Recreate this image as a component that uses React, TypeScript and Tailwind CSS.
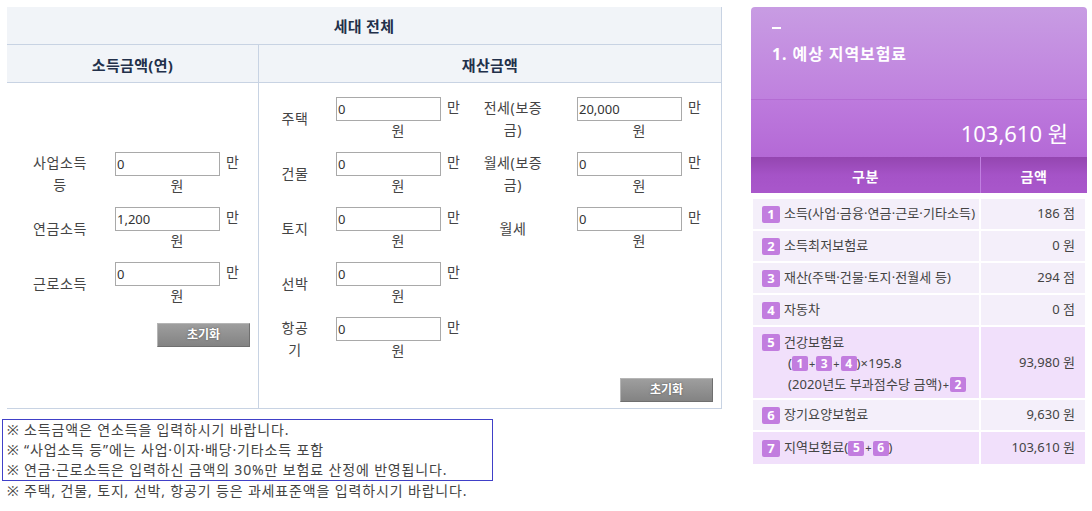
import React from "react";

function Field({ value }: { value: string }) {
  return (
    <div className="flex flex-col w-[124px]">
      <div className="flex items-start">
        <input
          readOnly
          value={value}
          className="w-[105px] h-[24px] border border-[#a9a9a9] bg-white px-[1px] text-[13px] tracking-normal text-[#333] outline-none"
        />
        <span className="ml-[6px] text-[14px] leading-[20px] text-[#444]">만</span>
      </div>
      <div className="text-center text-[14px] leading-[20px] text-[#444]">원</div>
    </div>
  );
}

function ResetButton() {
  return (
    <button className="w-[93px] h-[24px] border border-t-[#b5b5b5] border-l-[#b5b5b5] border-r-[#6f6f6f] border-b-[#6f6f6f] bg-gradient-to-b from-[#9e9e9e] to-[#838383] text-white text-[12px] font-bold leading-none tracking-normal [text-shadow:0_0_2px_#555]">
      초기화
    </button>
  );
}

function Badge({ n, small }: { n: string; small?: boolean }) {
  return (
    <span
      className={
        small
          ? "inline-flex items-center justify-center w-[16px] h-[15px] rounded-[2px] bg-[#c27ddf] text-white text-[12px] font-bold leading-none tracking-normal"
          : "inline-flex items-center justify-center w-[18px] h-[17px] rounded-[2px] bg-[#c27ddf] text-white text-[13px] font-bold leading-none tracking-normal shrink-0"
      }
    >
      {n}
    </span>
  );
}

function Row({
  n,
  label,
  value,
  strong,
}: {
  n: string;
  label: React.ReactNode;
  value: string;
  strong?: boolean;
}) {
  const bg = strong ? "bg-[#f1e0fb]" : "bg-[#f4effa]";
  return (
    <div className="grid grid-cols-[226px_104px] gap-x-[2px] h-[30px]">
      <div className={`${bg} flex items-center pl-[9px]`}>
        <Badge n={n} />
        <span className="ml-[4px] text-[13px] tracking-[0.1px] text-[#444] whitespace-nowrap">{label}</span>
      </div>
      <div className={`${bg} flex items-center justify-end pr-[10px] text-[13px] text-[#444]`}>{value}</div>
    </div>
  );
}

const Plus = () => <span className="text-[11px] mx-[1px] text-[#444] tracking-normal">+</span>;

function Label({ w, children }: { w: string; children: React.ReactNode }) {
  return <div className={`${w} text-center leading-[22px] text-[14px] tracking-[0.6px]`}>{children}</div>;
}

export default function App() {
  return (
    <div className="w-[1092px] h-[511px] bg-white flex font-['Noto_Sans','Noto_Sans_CJK_KR',sans-serif] text-[#444]">
      {/* Left */}
      <div className="pl-[2px] pt-[7px] w-[722px]">
        <div className="ml-[5px] w-[715px] border-r border-b border-[#c8d3e3]">
          <div className="h-[38px] bg-[#f1f4f8] border-b border-[#c8d3e3] flex items-center justify-center pt-[2px] text-[15px] font-bold text-[#22304a] tracking-[0.3px]">
            세대 전체
          </div>
          <div className="h-[38px] bg-[#f1f4f8] border-b border-[#c8d3e3] grid grid-cols-[252px_1fr] text-[15px] font-bold text-[#22304a] tracking-[0.3px]">
            <div className="border-r border-[#c8d3e3] flex items-center justify-center pt-[3px]">소득금액(연)</div>
            <div className="flex items-center justify-center pt-[3px]">재산금액</div>
          </div>
          <div className="h-[325px] grid grid-cols-[252px_1fr] text-[#444]">
            {/* income */}
            <div className="border-r border-[#c8d3e3] pt-[69px] flex flex-col">
              <div className="flex flex-col gap-[11px]">
                <div className="flex items-center">
                  <Label w="w-[106px]">
                    사업소득
                    <br />등
                  </Label>
                  <div className="ml-[2px]">
                    <Field value="0" />
                  </div>
                </div>
                <div className="flex items-center">
                  <Label w="w-[106px]">연금소득</Label>
                  <div className="ml-[2px]">
                    <Field value="1,200" />
                  </div>
                </div>
                <div className="flex items-center">
                  <Label w="w-[106px]">근로소득</Label>
                  <div className="ml-[2px]">
                    <Field value="0" />
                  </div>
                </div>
              </div>
              <div className="self-end mr-[8px] mt-[15px]">
                <ResetButton />
              </div>
            </div>
            {/* property */}
            <div className="pt-[14px] flex flex-col">
              <div className="flex flex-col gap-[11px]">
                <div className="flex items-center">
                  <Label w="w-[72px]">주택</Label>
                  <div className="ml-[5px]">
                    <Field value="0" />
                  </div>
                  <Label w="w-[106px]">
                    전세(보증
                    <br />
                    금)
                  </Label>
                  <div className="ml-[11px]">
                    <Field value="20,000" />
                  </div>
                </div>
                <div className="flex items-center">
                  <Label w="w-[72px]">건물</Label>
                  <div className="ml-[5px]">
                    <Field value="0" />
                  </div>
                  <Label w="w-[106px]">
                    월세(보증
                    <br />
                    금)
                  </Label>
                  <div className="ml-[11px]">
                    <Field value="0" />
                  </div>
                </div>
                <div className="flex items-center">
                  <Label w="w-[72px]">토지</Label>
                  <div className="ml-[5px]">
                    <Field value="0" />
                  </div>
                  <Label w="w-[106px]">월세</Label>
                  <div className="ml-[11px]">
                    <Field value="0" />
                  </div>
                </div>
                <div className="flex items-center">
                  <Label w="w-[72px]">선박</Label>
                  <div className="ml-[5px]">
                    <Field value="0" />
                  </div>
                </div>
                <div className="flex items-center">
                  <Label w="w-[72px]">
                    항공
                    <br />기
                  </Label>
                  <div className="ml-[5px]">
                    <Field value="0" />
                  </div>
                </div>
              </div>
              <div className="self-end mr-[8px] mt-[15px]">
                <ResetButton />
              </div>
            </div>
          </div>
        </div>
        {/* notes */}
        <div className="mt-[10px] text-[14px] leading-[20px] tracking-[0.85px] text-[#444]">
          <div className="w-[491px] border border-[#4040c8] pl-[4px]">
            <div className="whitespace-nowrap">※ 소득금액은 연소득을 입력하시기 바랍니다.</div>
            <div className="whitespace-nowrap">※ “사업소득 등”에는 사업·이자·배당·기타소득 포함</div>
            <div className="whitespace-nowrap">※ 연금·근로소득은 입력하신 금액의 30%만 보험료 산정에 반영됩니다.</div>
          </div>
          <div className="pl-[5px] whitespace-nowrap">※ 주택, 건물, 토지, 선박, 항공기 등은 과세표준액을 입력하시기 바랍니다.</div>
        </div>
      </div>

      {/* Right panel */}
      <div className="ml-[29px] mt-[7px] w-[336px]">
        <div className="rounded-t-[4px] overflow-hidden">
          <div className="h-[93px] bg-gradient-to-b from-[#c89ce3] to-[#bf80de] border-b border-[#b46cd3] pl-[21px] pt-[20px]">
            <div className="w-[9px] h-[2px] bg-white" />
            <div className="mt-[14px] text-[16px] font-bold text-white leading-[22px] tracking-[0.9px]">1. 예상 지역보험료</div>
          </div>
          <div className="h-[57px] bg-gradient-to-b from-[#bd7add] to-[#b469d6] pt-[20px] pr-[19px] text-right text-[22px] leading-[26px] text-white">
            103,610 원
          </div>
          <div className="h-[36px] bg-gradient-to-b from-[#9446b0] via-[#a553c7] to-[#a957cb] grid grid-cols-[230px_1fr] text-[14px] font-bold text-white tracking-[0.5px]">
            <div className="border-r border-[#c07fe0] flex items-center justify-center pt-[2px]">구분</div>
            <div className="flex items-center justify-center pt-[2px]">금액</div>
          </div>
        </div>
        <div className="pt-[6px] px-[2px] flex flex-col gap-[2px]">
          <Row n="1" label="소득(사업·금융·연금·근로·기타소득)" value="186 점" />
          <Row n="2" label="소득최저보험료" value="0 원" />
          <Row n="3" label="재산(주택·건물·토지·전월세 등)" value="294 점" />
          <Row n="4" label="자동차" value="0 점" />
          <div className="grid grid-cols-[226px_104px] gap-x-[2px] h-[71px]">
            <div className="bg-[#f1e0fb] pl-[9px] pt-[5px] text-[13px] tracking-[0.1px] text-[#444] leading-[21px]">
              <div className="flex items-center">
                <Badge n="5" />
                <span className="ml-[4px]">건강보험료</span>
              </div>
              <div className="pl-[26px] flex items-center whitespace-nowrap">
                (<Badge n="1" small />
                <Plus />
                <Badge n="3" small />
                <Plus />
                <Badge n="4" small />)×195.8
              </div>
              <div className="pl-[26px] flex items-center whitespace-nowrap">
                (2020년도 부과점수당 금액)
                <Plus />
                <Badge n="2" small />
              </div>
            </div>
            <div className="bg-[#f1e0fb] flex items-center justify-end pr-[10px] text-[13px] text-[#444]">93,980 원</div>
          </div>
          <Row n="6" label="장기요양보험료" value="9,630 원" />
          <div className="grid grid-cols-[226px_104px] gap-x-[2px] h-[32px]">
            <div className="bg-[#f1e0fb] flex items-center pl-[9px] text-[13px] tracking-[0.1px] text-[#444] whitespace-nowrap">
              <Badge n="7" />
              <span className="ml-[4px] flex items-center">
                지역보험료(
                <Badge n="5" small />
                <Plus />
                <Badge n="6" small />)
              </span>
            </div>
            <div className="bg-[#f1e0fb] flex items-center justify-end pr-[10px] text-[13px] text-[#444]">103,610 원</div>
          </div>
        </div>
      </div>
    </div>
  );
}
